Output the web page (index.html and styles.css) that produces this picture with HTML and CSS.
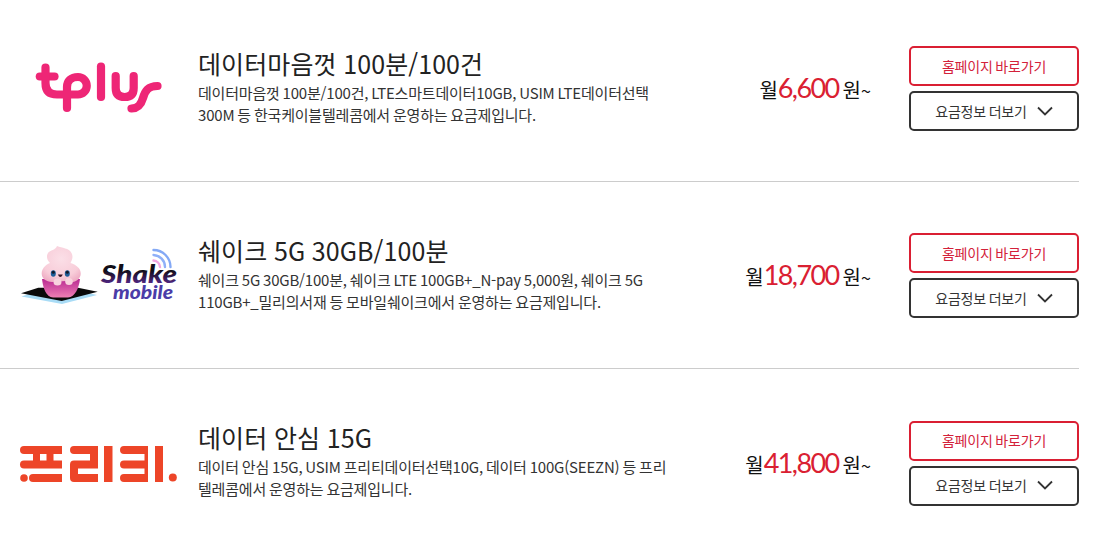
FILE: index.html
```html
<!DOCTYPE html>
<html lang="ko">
<head>
<meta charset="utf-8">
<title>요금제</title>
<link rel="stylesheet" href="styles.css">
</head>
<body>
<ul class="plans">
  <li class="plan">
    <div class="logo">
      <svg width="198" height="85" viewBox="0 46 198 85" class="logo-svg">
        <g fill="none" stroke="#ee2676" stroke-width="8.200" stroke-linecap="round" stroke-linejoin="round">
          <path d="M39.800 76.500H54.500"/>
          <path d="M45.500 67.500V83Q45.500 94.500 57 94.500H78A8.750 8.750 0 0 0 78 77C71 77 67 81 67 87V108"/>
          <path d="M101 66.500V97"/>
          <path d="M115.700 76V88Q115.700 97 124.700 97T133.700 88V76"/>
          <path d="M157.500 86C148 86 145 91 143 98S138 108 131.500 108.500"/>
        </g>
      </svg>
    </div>
    <div class="info">
      <h3 class="name">데이터마음껏 100분/100건</h3>
      <p class="desc">데이터마음껏 100분/100건, LTE스마트데이터10GB, USIM LTE데이터선택<br>300M 등 한국케이블텔레콤에서 운영하는 요금제입니다.</p>
    </div>
    <div class="price"><span class="unit">월</span><b class="amount">6,600</b><span class="unit after">원</span><span class="tilde">~</span></div>
    <div class="actions">
      <a class="btn btn-red">홈페이지 바로가기</a>
      <a class="btn btn-dark">요금정보 더보기<svg class="chev" width="16" height="10" viewBox="0 0 16 10"><path d="M1 1.500 8 8.500l7-7"/></svg></a>
    </div>
  </li>
  <li class="plan">
    <div class="logo">
      <svg width="198" height="85" viewBox="0 233 198 85" class="logo-svg">
        <defs>
          <radialGradient id="cream" cx="0.5" cy="0.35" r="0.7"><stop offset="0" stop-color="#fbdfe7"/><stop offset="0.7" stop-color="#f8cdd9"/><stop offset="1" stop-color="#eeabc3"/></radialGradient>
          <linearGradient id="cup" x1="0" y1="0" x2="0" y2="1"><stop offset="0" stop-color="#b92a92"/><stop offset="1" stop-color="#ee7fb4"/></linearGradient>
          <linearGradient id="sk" x1="0" y1="0" x2="0" y2="1"><stop offset="0.400" stop-color="#120d18"/><stop offset="0.900" stop-color="#5a2a92"/></linearGradient>
        </defs>
        <path d="M21.500 296.500 38 291H80L97 295 62 304Z" fill="#a9dcf6"/>
        <path d="M21 293.300 38.300 287.700H78L97.700 291.700 61.700 301Z" fill="#0a0a0a"/>
        <path d="M42 279H80C79 288 75 297 68 297.500H53C46 297 43 288 42 279Z" fill="url(#cup)"/>
        <path d="M57 246C62 248 69 248 71.500 253 73.500 257 72 260 70.500 263 77 265 81 269 80.700 274 80.500 279 76 282 70 282.500L66 281 52 282C46 281.500 42 279 41.700 274 41.500 269 45 265 50 263 47 260 46 256 48 253 50 250 56 250 57 246Z" fill="url(#cream)"/>
        <ellipse cx="57.500" cy="282" rx="4" ry="3.500" fill="#f8d3de"/>
        <ellipse cx="69" cy="281.500" rx="3.800" ry="3.500" fill="#f8d3de"/>
        <ellipse cx="53.300" cy="273.500" rx="2.500" ry="3.200" fill="#1d5d99"/>
        <ellipse cx="67.300" cy="273.500" rx="2.500" ry="3.200" fill="#1d5d99"/>
        <circle cx="53.300" cy="272.300" r="1.500" fill="#151a2a"/>
        <circle cx="67.300" cy="272.300" r="1.500" fill="#151a2a"/>
        <path d="M57.800 274.500Q60.300 279.500 62.800 274.500Z" fill="#3a1322"/>
        <g fill="none" stroke-linecap="round" stroke-width="2.400">
          <path d="M153.500 260.500A7 7 0 0 1 160 267" stroke="#f2a5e0"/>
          <path d="M153.500 255A12 12 0 0 1 165 267" stroke="#8fb0f8"/>
          <path d="M153.500 250A17 17 0 0 1 170.500 267" stroke="#84a9f5"/>
        </g>
        <text x="101" y="283" textLength="76" lengthAdjust="spacingAndGlyphs" class="shake">Shake</text>
        <text x="113" y="299" textLength="60" lengthAdjust="spacingAndGlyphs" class="mobile">mobile</text>
      </svg>
    </div>
    <div class="info">
      <h3 class="name">쉐이크 5G 30GB/100분</h3>
      <p class="desc">쉐이크 5G 30GB/100분, 쉐이크 LTE 100GB+_N-pay 5,000원, 쉐이크 5G<br>110GB+_밀리의서재 등 모바일쉐이크에서 운영하는 요금제입니다.</p>
    </div>
    <div class="price"><span class="unit">월</span><b class="amount">18,700</b><span class="unit after">원</span><span class="tilde">~</span></div>
    <div class="actions">
      <a class="btn btn-red">홈페이지 바로가기</a>
      <a class="btn btn-dark">요금정보 더보기<svg class="chev" width="16" height="10" viewBox="0 0 16 10"><path d="M1 1.500 8 8.500l7-7"/></svg></a>
    </div>
  </li>
  <li class="plan">
    <div class="logo">
      <svg width="198" height="85" viewBox="0 420 198 85" class="logo-svg">
        <g fill="#ed4528">
          <path d="M24 445H62V453H24a4 4 0 0 1 0-8Z"/>
          <path d="M33 453H40V460H33ZM46.500 453H53.500V460H46.500Z"/>
          <path d="M24 459.500H62V467.500H24a4 4 0 0 1 0-8Z"/>
          <circle cx="24" cy="477" r="3.800"/>
          <path d="M33 473H62V481H33a4 4 0 0 1 0-8Z"/>
          <path d="M74 445H98V467.500H78V473H98V481H74a4 4 0 0 1-4-4V463.500a4 4 0 0 1 4-4H90V453H74a4 4 0 0 1 0-8Z"/>
          <path d="M104 445H112.500V481H104Z"/>
          <path d="M124 445H148V481H124a4 4 0 0 1 0-8H144.500V467.500H124a4 4 0 0 1 0-8H144.500V453H124a4 4 0 0 1 0-8Z"/>
          <path d="M155 445H163V481H155Z"/>
          <circle cx="172.800" cy="476.500" r="4"/>
        </g>
      </svg>
    </div>
    <div class="info">
      <h3 class="name">데이터 안심 15G</h3>
      <p class="desc">데이터 안심 15G, USIM 프리티데이터선택10G, 데이터 100G(SEEZN) 등 프리<br>텔레콤에서 운영하는 요금제입니다.</p>
    </div>
    <div class="price"><span class="unit">월</span><b class="amount">41,800</b><span class="unit after">원</span><span class="tilde">~</span></div>
    <div class="actions">
      <a class="btn btn-red">홈페이지 바로가기</a>
      <a class="btn btn-dark">요금정보 더보기<svg class="chev" width="16" height="10" viewBox="0 0 16 10"><path d="M1 1.500 8 8.500l7-7"/></svg></a>
    </div>
  </li>
</ul>
</body>
</html>
```
FILE: styles.css
```css
* { box-sizing: border-box; }
html, body { margin: 0; padding: 0; background: #fff; }
body { width: 1116px; height: 545px; overflow: hidden; font-family: "Noto Sans CJK KR", "Noto Sans", sans-serif; color: #222; }
.plans { list-style: none; margin: 0; padding: 0; width: 1079px; }
.plan { display: flex; align-items: center; height: 187px; padding: 51px 0 50px; border-bottom: 1px solid #ccc; }
.plan:first-child { height: 182px; padding-top: 46px; }
.plan:last-child { border-bottom: 0; }
.logo { width: 198px; height: 85px; flex: none; }
.logo-svg { display: block; }
.info { width: 500px; flex: none; padding-bottom: 7px; }
.name { margin: 0 0 1px; font-size: 25px; font-weight: 400; line-height: 36px; letter-spacing: 0.1px; word-spacing: -0.5px; color: #222; }
.desc { margin: 0; font-size: 15px; line-height: 22px; letter-spacing: -0.2px; word-spacing: -1px; color: #333; }
.price { flex: 1; display: flex; justify-content: flex-end; align-items: baseline; padding-right: 38px; color: #111; transform: translateY(-1px); }
.unit { font-size: 20px; }
.unit.after { margin-left: 4px; }
.tilde { font-size: 18px; }
.amount { font-family: Lato, sans-serif; font-weight: 400; font-size: 27px; letter-spacing: -1.6px; color: #da2032; }
.actions { width: 170px; flex: none; display: flex; flex-direction: column; gap: 5px; }
.btn { height: 40px; display: flex; align-items: center; justify-content: center; border-radius: 5px; font-size: 14px; letter-spacing: -0.2px; word-spacing: -1px; padding-bottom: 1px; background: #fff; }
.btn-red { border: 2px solid #da1f33; color: #d3213a; }
.btn-dark { border: 2px solid #333; color: #333; }
.chev { margin-left: 10px; fill: none; stroke: #333; stroke-width: 1.800; }
.shake { font-family: Lato, sans-serif; font-weight: 900; font-style: italic; font-size: 24px; fill: url(#sk); }
.mobile { font-family: Lato, sans-serif; font-weight: 900; font-style: italic; font-size: 19px; fill: #4b3ca8; }
```
